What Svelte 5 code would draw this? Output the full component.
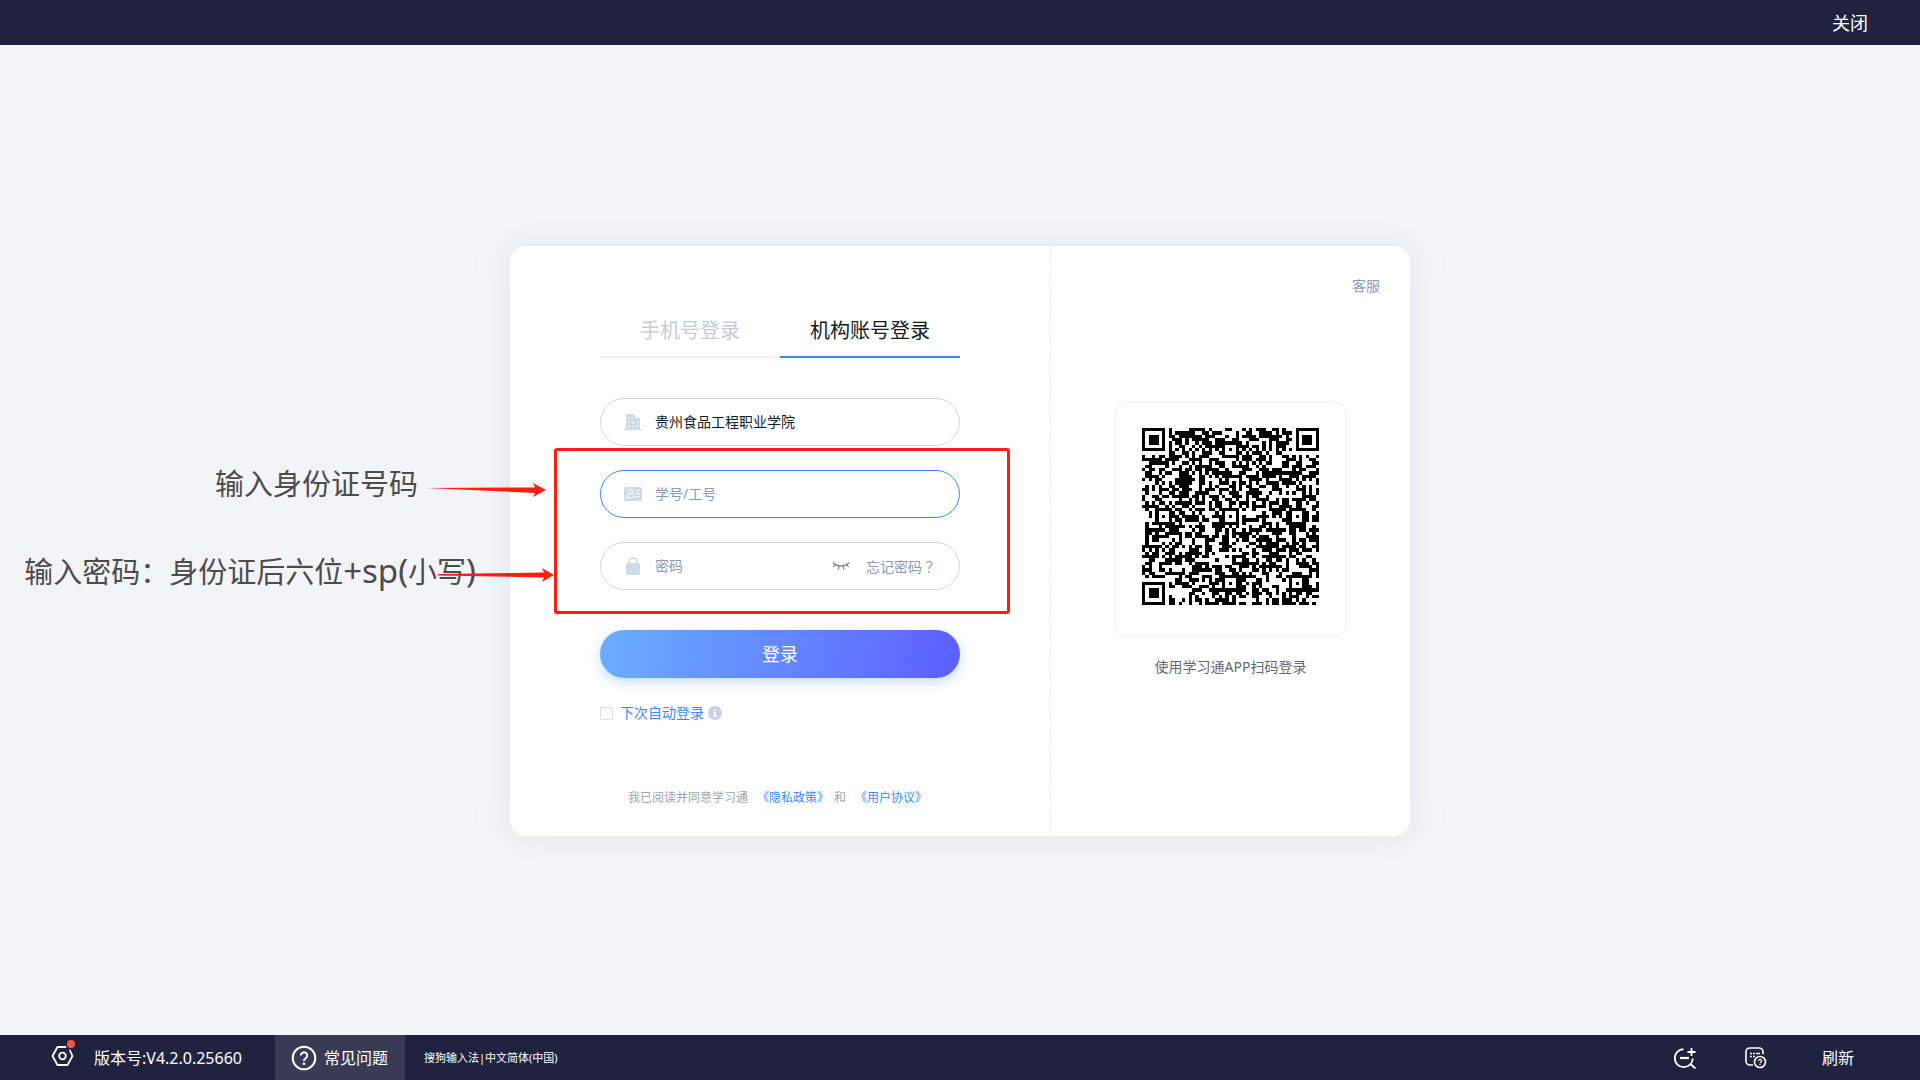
<script>
	let school = '贵州食品工程职业学院'
	let account = ''
	let password = ''
	let autoLogin = false
	let tab = 'org'

	const SIZE = 53
	const qrPath = buildQr()

	function finder(x, y, left, top) {
		const dx = Math.abs(x - left - 3)
		const dy = Math.abs(y - top - 3)
		const ring = Math.max(dx, dy)
		if (ring > 4) return null
		return ring === 3 || ring < 2
	}

	function alignment(x, y) {
		for (const [cx, cy] of [[26, 6], [6, 26], [26, 26], [46, 26], [26, 46], [46, 46]]) {
			const ring = Math.max(Math.abs(x - cx), Math.abs(y - cy))
			if (ring <= 2) return ring !== 1
		}
		return null
	}

	function buildQr() {
		let seed = 90217
		let d = ''
		for (let y = 0; y < SIZE; y++) {
			for (let x = 0; x < SIZE; x++) {
				seed = (seed * 1103515245 + 12345) % 2147483648
				let on = finder(x, y, 0, 0)
				if (on === null) on = finder(x, y, SIZE - 7, 0)
				if (on === null) on = finder(x, y, 0, SIZE - 7)
				if (on === null) on = alignment(x, y)
				if (on === null && (x === 6 || y === 6)) on = (x + y) % 2 === 0
				if (on === null) on = seed / 2147483648 < 0.52
				if (on) d += `M${x} ${y}h1v1h-1z`
			}
		}
		return d
	}
</script>

<svelte:head>
	<title>登录</title>
</svelte:head>

<div class="page">
	<header class="topbar">
		<button class="close">关闭</button>
	</header>

	<main>
		<div class="card">
			<form class="login" on:submit|preventDefault>
				<div class="tabs">
					<button type="button" class:active={tab === 'phone'} on:click={() => tab = 'phone'}>手机号登录</button>
					<button type="button" class:active={tab === 'org'} on:click={() => tab = 'org'}>机构账号登录</button>
				</div>

				<div class="fields">
					<label class="field">
						<svg width="18" height="18" viewBox="0 0 18 18">
							<path d="M2 16V3a2 2 0 0 1 2-2h5a2 2 0 0 1 2 2v1l4 1a1 1 0 0 1 1 1v10h2v1H0v-1z" fill="#cfd9e8" />
							<path d="M4 5.500h2M8 5.500h1M4 9.500h2M8 9.500h2M4 13.500h2M8 13.500h2M13 8.500h1M13 12.500h1" stroke="#fff" />
						</svg>
						<input type="text" aria-label="机构" bind:value={school} />
					</label>
					<label class="field focus">
						<svg width="18" height="18" viewBox="0 0 18 18">
							<rect y="2" width="18" height="14" rx="2" fill="#cfd9e8" />
							<circle cx="6.500" cy="6.800" r="2.200" fill="none" stroke="#fff" />
							<path d="M4.700 8.700C3 9.300 2.500 10.500 2.500 12.500h8c0-2-.5-3.200-2.200-3.800" fill="none" stroke="#fff" />
							<path d="M11 5.500h5M12 8.500h4M12 11.500h4" stroke="#fff" stroke-opacity=".8" />
						</svg>
						<input type="text" placeholder="学号/工号" aria-label="学号/工号" bind:value={account} />
					</label>
					<label class="field">
						<svg width="18" height="18" viewBox="0 0 18 18">
							<path d="M5 7V5a4 4 0 0 1 8 0v2" fill="none" stroke="#cfd9e8" stroke-width="1.600" />
							<rect x="2" y="6" width="14" height="12" rx="2" fill="#cfd9e8" />
						</svg>
						<input type="password" placeholder="密码" aria-label="密码" bind:value={password} />
						<button type="button" class="eye" aria-label="显示密码">
							<svg width="18" height="10" viewBox="0 0 18 10">
								<path d="M1 1.500C5 6 13 6 17 1.500M3.500 3.500L1.500 6M7 5L6.300 8.500M11 5l.9 3.500M14.500 3.500L16.500 6" fill="none" stroke="#777a88" stroke-width="1.200" />
							</svg>
						</button>
						<a href="#forgot" class="forgot">忘记密码？</a>
					</label>
				</div>

				<button class="submit">登录</button>

				<div class="auto">
					<input type="checkbox" id="auto" bind:checked={autoLogin} />
					<label for="auto">下次自动登录</label>
					<svg width="14" height="14" viewBox="0 0 14 14">
						<circle cx="7" cy="7" r="7" fill="#c6d2e3" />
						<path d="M6 3h2v1.800H6zM5.300 6H8v4h1v1H5.200v-1H6V7h-.7z" fill="#fff" />
					</svg>
				</div>

				<p class="agreement">我已阅读并同意学习通<a href="#privacy">《隐私政策》</a>和<a href="#terms">《用户协议》</a></p>
			</form>

			<section class="scan">
				<a href="#service" class="service">客服</a>
				<div class="qr">
					<svg width="177" height="177" viewBox="0 0 {SIZE} {SIZE}" shape-rendering="crispEdges" role="img" aria-label="二维码">
						<path d={qrPath} />
					</svg>
				</div>
				<p>使用学习通APP扫码登录</p>
			</section>

			<!-- hand-drawn notes over the form -->
			<div class="mark"></div>
			<div class="note note-account">输入身份证号码</div>
			<div class="note note-password">输入密码：身份证后六位<span>+sp(</span>小写<span>)</span></div>
			<svg class="arrow arrow-account" width="120" height="14" viewBox="0 0 120 14">
				<path d="M0 5L109 4.500L107 0L120 7L107 14L109 10z" fill="#ff1e10" />
			</svg>
			<svg class="arrow arrow-password" width="120" height="14" viewBox="0 0 120 14">
				<path d="M4 6L110 4.500L108 0L120 7L108 14L110 9.500L4 7.500z" fill="#ff1e10" />
			</svg>
		</div>
	</main>

	<footer class="bottombar">
		<button class="version">
			<svg width="26" height="30" viewBox="0 0 26 30">
				<path d="M15.500 7H7.500L2.500 16l5 9h10l5-9-2.500-5.500" fill="none" stroke="#fff" stroke-width="1.800" stroke-linejoin="round" stroke-linecap="round" />
				<circle cx="12.500" cy="16" r="3.300" fill="none" stroke="#fff" stroke-width="1.800" />
				<circle cx="21" cy="4" r="4" fill="#ff5448" />
			</svg>
			版本号:V4.2.0.25660
		</button>
		<button class="help">
			<svg width="26" height="26" viewBox="0 0 26 26">
				<circle cx="13" cy="13" r="11.300" fill="none" stroke="#fff" stroke-width="2" />
				<path d="M9.800 10.500a3.200 3.200 0 1 1 5 2.700c-1.300.9-1.800 1.400-1.800 2.800" fill="none" stroke="#fff" stroke-width="2" />
				<circle cx="13" cy="18.800" r="1.300" fill="#fff" />
			</svg>
			常见问题
		</button>
		<span class="ime">搜狗输入法|中文简体(中国)</span>
		<div class="tools">
			<button aria-label="缩放">
				<svg width="22" height="22" viewBox="0 0 22 22" fill="none" stroke="#fff" stroke-width="1.800">
					<path d="M9.500 2.200A9 9 0 1 0 18.800 11.500M16.500 17l5 4.500M17.500 1v8M13.500 5h8" />
					<path d="M6 11h9" stroke-width="2.200" />
				</svg>
			</button>
			<button aria-label="键盘帮助">
				<svg width="22" height="22" viewBox="0 0 22 22" fill="none" stroke="#fff" stroke-width="1.600">
					<path d="M8 18H5a4 4 0 0 1-4-4V5a4 4 0 0 1 4-4h9a4 4 0 0 1 4 4v2" />
					<path d="M5 6.500h2M8 6.500h2M11 6.500h4M5 9.500h2M8 9.500h2" />
					<circle cx="15" cy="15" r="5.500" />
					<path d="M13.500 14a1.500 1.500 0 1 1 2.300 1.200c-.6.300-.8.500-.8 1M15 17v1" stroke-width="1.200" />
				</svg>
			</button>
			<button>刷新</button>
		</div>
	</footer>
</div>

<style>
	:global(body) {
		margin: 0;
		background: #f2f4f8;
	}

	.page {
		display: flex;
		flex-direction: column;
		min-height: 100vh;
		overflow: hidden;
		font-family: "Noto Sans", "Noto Sans CJK SC", sans-serif;
		font-size: 14px;
		line-height: 20px;
		color: #131b26;
	}

	.page, .page * {
		box-sizing: border-box;
	}

	button, input {
		font: inherit;
		color: inherit;
		border: 0;
		padding: 0;
		margin: 0;
		background: none;
	}

	button {
		cursor: pointer;
	}

	a {
		text-decoration: none;
	}

	svg {
		display: block;
		flex: none;
	}

	p {
		margin: 0;
	}

	.topbar, .bottombar {
		display: flex;
		height: 45px;
		background: #1f2340;
		color: #fff;
		font-size: 16px;
	}

	.topbar {
		justify-content: flex-end;
		padding-right: 52px;
	}

	.close {
		font-size: 18px;
	}

	main {
		flex: 1;
		display: flex;
		align-items: center;
		justify-content: center;
		padding-top: 2px;
	}

	.card {
		position: relative;
		display: flex;
		width: 900px;
		background: #fff;
		border-radius: 16px;
		box-shadow: 0 0 30px rgba(205, 220, 228, .5);
	}

	.login {
		width: 541px;
		padding: 64px 90px 28px;
		border-right: 1px dashed #eceef0;
	}

	.tabs {
		display: flex;
	}

	.tabs button {
		flex: 1;
		height: 48px;
		padding-bottom: 4px;
		border-bottom: 2px solid #f2f2f2;
		font-size: 20px;
		color: #c8cad6;
	}

	.tabs .active {
		border-color: #3a8bff;
		color: #131b26;
	}

	.fields {
		display: grid;
		gap: 24px;
		margin: 40px 0;
	}

	.field {
		display: flex;
		align-items: center;
		height: 48px;
		padding: 0 23px;
		border: 1px solid #d4d6d9;
		border-radius: 24px;
	}

	.focus {
		border-color: #3a8bff;
	}

	.field input {
		flex: 1;
		min-width: 0;
		margin-left: 13px;
		outline: none;
	}

	.field input::placeholder {
		color: #8a9bb8;
		opacity: 1;
	}

	.eye {
		margin-right: 16px;
	}

	.forgot, .service {
		color: #8a9bb8;
	}

	/* this family centres the full-width question mark */
	.forgot {
		font-family: "Noto Sans CJK TC", sans-serif;
	}

	.submit {
		display: block;
		width: 100%;
		height: 48px;
		border-radius: 24px;
		background: linear-gradient(99deg, #6aaeff 0%, #5d5fff 100%);
		box-shadow: 0 4px 12px rgba(58, 139, 255, .3);
		font-size: 18px;
		color: #fff;
	}

	.auto {
		display: flex;
		align-items: center;
		margin: 25px 0 65px;
		color: #3a8bff;
	}

	.auto input {
		appearance: none;
		width: 13px;
		height: 13px;
		margin-right: 7px;
		border: 1px solid #d5dde8;
		border-radius: 2px;
	}

	.auto input:checked {
		background: #3a8bff;
	}

	.auto svg {
		margin-left: 4px;
	}

	.agreement {
		padding-left: 28px;
		font-size: 12px;
		color: #a0a3ad;
		white-space: nowrap;
	}

	.agreement a {
		margin: 0 5px 0 9px;
		color: #3a8bff;
	}

	.scan {
		flex: 1;
		display: flex;
		flex-direction: column;
		align-items: center;
		padding-top: 30px;
	}

	.service {
		align-self: flex-end;
		margin-right: 30px;
	}

	.qr {
		margin: 105px 0 20px;
		padding: 26px 26px 31px;
		border: 1px solid #f2f2f2;
		border-radius: 12px;
	}

	.scan p {
		color: #646873;
	}

	.mark {
		position: absolute;
		left: 44px;
		top: 202px;
		width: 456px;
		height: 166px;
		border: 3px solid #ff1e10;
		border-radius: 3px;
		pointer-events: none;
	}

	.note {
		position: absolute;
		font-size: 29px;
		line-height: 40px;
		color: #4c4c4c;
		white-space: nowrap;
	}

	.note span {
		font-size: 33px;
	}

	.note-account {
		right: 992px;
		top: 218px;
	}

	.note-password {
		right: 934px;
		top: 305px;
	}

	.arrow {
		position: absolute;
	}

	.arrow-account {
		left: -84px;
		top: 237px;
	}

	.arrow-password {
		left: -76px;
		top: 322px;
	}

	.bottombar {
		align-items: stretch;
	}

	.version {
		display: flex;
		align-items: center;
		gap: 18px;
		padding: 0 33px 0 50px;
	}

	.version svg {
		margin-bottom: 6px;
	}

	.help {
		display: flex;
		align-items: center;
		gap: 7px;
		width: 130px;
		padding-left: 16px;
		background: #393b55;
	}

	.ime {
		align-self: center;
		margin-left: 19px;
		font-size: 11px;
	}

	.tools {
		display: flex;
		align-items: center;
		gap: 49px;
		margin-left: auto;
		padding-right: 66px;
	}

	.tools button:last-child {
		margin-left: 6px;
	}
</style>
